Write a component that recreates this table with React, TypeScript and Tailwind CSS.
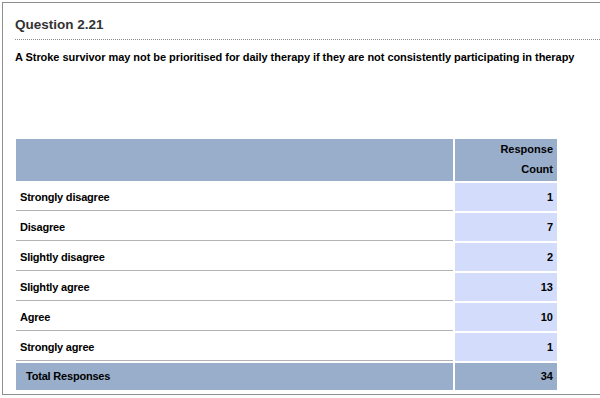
const rows: { label: string; count: number }[] = [
  { label: 'Strongly disagree', count: 1 },
  { label: 'Disagree', count: 7 },
  { label: 'Slightly disagree', count: 2 },
  { label: 'Slightly agree', count: 13 },
  { label: 'Agree', count: 10 },
  { label: 'Strongly agree', count: 1 },
];

export default function App() {
  return (
    <div className="w-[600px] h-[398px] bg-white overflow-hidden font-['Liberation_Sans',Arial,sans-serif]">
      <div className="ml-[2px] mt-[2px] h-[393px] w-[640px] border-l border-t border-b border-[#8f8f8f] pl-[12px] pt-[13px]">
        <div className="mr-[40px] border-b border-dotted border-[#8a8a8a] pb-[6px]">
          <h2 className="text-[13.5px] leading-[17px] font-bold text-[#333]">Question 2.21</h2>
        </div>
        <p className="mt-[9px] text-[11px] leading-[16px] tracking-[-0.05px] font-bold text-black whitespace-nowrap">
          A Stroke survivor may not be prioritised for daily therapy if they are not consistently participating in therapy
        </p>

        <div className="mt-[74px] ml-[1px] grid grid-cols-[437px_102px] gap-x-[2px] gap-y-[2px] text-[11px] font-bold text-black">
          <div className="h-[42px] bg-[#98aecb]" />
          <div className="h-[42px] bg-[#98aecb] pr-[4px] text-right leading-[20px]">
            <div>Response</div>
            <div>Count</div>
          </div>

          {rows.map((r) => (
            <div key={r.label} className="contents">
              <div className="h-[28px] border-b border-[#b4b4b4] pl-[4px] pt-[1px] flex items-center tracking-[-0.2px]">{r.label}</div>
              <div className="h-[28px] bg-[#d3dcfa] pr-[4px] pt-[1px] flex items-center justify-end">{r.count}</div>
            </div>
          ))}

          <div className="h-[27px] bg-[#98aecb] pl-[10px] flex items-center tracking-[-0.2px]">Total Responses</div>
          <div className="h-[27px] bg-[#98aecb] pr-[4px] flex items-center justify-end">34</div>
        </div>
      </div>
    </div>
  );
}
